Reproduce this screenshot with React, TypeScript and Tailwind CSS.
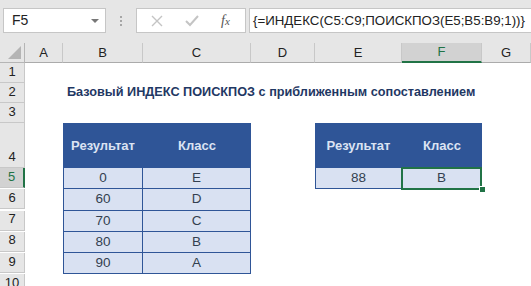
import React from "react";

const cols = ["A", "B", "C", "D", "E", "F", "G"];

const leftRows = [
  ["0", "E"],
  ["60", "D"],
  ["70", "C"],
  ["80", "B"],
  ["90", "A"],
];

function RowHead({ n, h = "h-[20px]", active = false }: { n: number; h?: string; active?: boolean }) {
  return (
    <div
      className={`${h} flex items-end justify-center border-b border-r border-[#c8c8c8] pb-[1px] text-[13px] ${
        active ? "bg-[#d2d2d2] border-r-2 border-r-[#217346] text-[#217346]" : "bg-[#e6e6e6] text-[#222]"
      }`}
    >
      {n}
    </div>
  );
}

const head = "flex items-center justify-center bg-[#2f5597] font-bold text-[13px] text-[#dbe3f3]";
const data = "flex items-center justify-center bg-[#d9e1f2] border-r border-b border-[#2f5597] text-[13.5px] text-[#333f50]";

export default function App() {
  return (
    <div className="h-[286px] w-[531px] overflow-hidden bg-white font-['Liberation_Sans',sans-serif]">
      {/* formula bar */}
      <div className="flex h-[43px] items-start bg-[#e6e6e6] pt-[8px] pl-[3px]">
        <div className="flex h-[25px] w-[103px] items-center justify-between border border-[#c6c6c6] bg-white pl-[8px] pr-[6px] text-[14px] text-[#222]">
          <span>F5</span>
          <span className="h-0 w-0 border-x-[4px] border-t-[4px] border-x-transparent border-t-[#777]" />
        </div>
        <div className="flex h-[25px] w-[30px] flex-col items-center justify-center gap-[2px]">
          <span className="h-[2px] w-[2px] bg-[#a6a6a6]" />
          <span className="h-[2px] w-[2px] bg-[#a6a6a6]" />
          <span className="h-[2px] w-[2px] bg-[#a6a6a6]" />
        </div>
        <div className="flex h-[25px] w-[110px] items-center border border-[#c6c6c6] bg-white">
          <svg width="12" height="12" viewBox="0 0 12 12" className="ml-[14px]">
            <path d="M1 1L11 11M11 1L1 11" stroke="#c4c4c4" strokeWidth="1.4" />
          </svg>
          <svg width="14" height="12" viewBox="0 0 14 12" className="ml-[22px]">
            <path d="M1 6L5 10L13 1" stroke="#c4c4c4" strokeWidth="2" fill="none" />
          </svg>
          <span className="ml-[22px] font-['Liberation_Serif',serif] text-[14px] italic text-[#555]">
            f<span className="text-[11px]">x</span>
          </span>
        </div>
        <div className="ml-[3px] flex h-[25px] flex-1 items-center border border-r-0 border-[#c6c6c6] bg-white pl-[3px] text-[13.3px] text-[#222]">
          {"{=ИНДЕКС(C5:C9;ПОИСКПОЗ(E5;B5:B9;1))}"}
        </div>
      </div>

      {/* sheet */}
      <div className="grid grid-cols-[25px_38px_80px_108px_64px_87px_80px_1fr]">
        {/* column headers */}
        <div className="relative h-[20px] border-b border-r border-[#b5b5b5] bg-[#e6e6e6]">
          <span className="absolute bottom-[3px] right-[3px] h-0 w-0 border-b-[13px] border-l-[13px] border-b-[#b4b4b4] border-l-transparent" />
        </div>
        {cols.map((c) =>
          c === "F" ? (
            <div
              key={c}
              className="flex h-[20px] items-center justify-center border-b-2 border-r border-b-[#217346] border-r-[#c8c8c8] bg-[#d2d2d2] text-[13px] text-[#217346]"
            >
              {c}
            </div>
          ) : (
            <div
              key={c}
              className="flex h-[20px] items-center justify-center border-b border-r border-b-[#ababab] border-r-[#c8c8c8] bg-[#e6e6e6] text-[13px] text-[#222]"
            >
              {c}
            </div>
          )
        )}

        {/* row 1 */}
        <RowHead n={1} />
        <div className="col-span-7" />

        {/* row 2 */}
        <RowHead n={2} />
        <div />
        <div className="col-span-6 flex items-center whitespace-nowrap pl-[4px] text-[12.7px] font-bold text-[#1f3864]">
          Базовый ИНДЕКС ПОИСКПОЗ с приближенным сопоставлением
        </div>

        {/* row 3 */}
        <RowHead n={3} />
        <div className="col-span-7" />

        {/* row 4 */}
        <RowHead n={4} h="h-[45px]" />
        <div />
        <div className={head}>Результат</div>
        <div className={head}>Класс</div>
        <div />
        <div className={head}>Результат</div>
        <div className={head}>Класс</div>
        <div />

        {leftRows.map(([score, grade], i) => (
          <React.Fragment key={score}>
            <RowHead n={5 + i} active={i === 0} />
            <div />
            <div className={`${data} border-l`}>{score}</div>
            <div className={data}>{grade}</div>
            <div />
            {i === 0 ? (
              <>
                <div className={`${data} border-l`}>88</div>
                <div className={`${data} relative`}>
                  B
                  <span className="absolute -bottom-[2px] -left-[1px] -right-[1px] -top-[1px] border-2 border-[#217346]" />
                  <span className="absolute -bottom-[5px] -right-[5px] h-[7px] w-[7px] border border-white bg-[#217346]" />
                </div>
              </>
            ) : (
              <>
                <div />
                <div />
              </>
            )}
            <div />
          </React.Fragment>
        ))}

        <RowHead n={10} />
        <div className="col-span-7" />
      </div>
    </div>
  );
}
